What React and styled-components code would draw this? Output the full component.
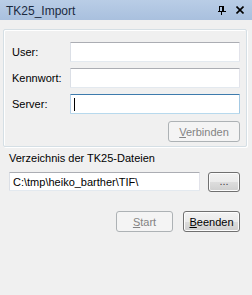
import styled, { createGlobalStyle, css } from "styled-components";

const Global = createGlobalStyle`
  html, body {
    margin: 0;
    padding: 0;
    background: #f0f0f0;
  }
  body {
    font-family: "Liberation Sans", Arial, sans-serif;
    font-size: 11px;
    color: #000;
  }
`;

const Window = styled.div`
  width: 252px;
  height: 295px;
  background: #f0f0f0;
  display: flex;
  flex-direction: column;
  box-sizing: border-box;
`;

const TitleBar = styled.div`
  height: 20px;
  background: linear-gradient(#b9cde6, #a9c0de);
  display: flex;
  align-items: center;
  justify-content: space-between;
  padding: 0 8px 0 6px;
  box-sizing: border-box;
`;

const Title = styled.span`
  font-size: 12px;
  color: #1b2a3f;
  padding-top: 1px;
`;

const TitleIcons = styled.div`
  display: flex;
  align-items: center;
  gap: 10px;
`;

const Group = styled.div`
  margin: 9px 5px 0 3px;
  border: 1px solid #d5dfe5;
  box-shadow: inset 1px 1px 0 #fff, 1px 1px 0 #fff;
  border-radius: 2px;
  padding: 12px 6px 4px 8px;
  display: flex;
  flex-direction: column;
`;

const FieldGrid = styled.div`
  display: grid;
  grid-template-columns: 58px 1fr;
  row-gap: 6px;
  align-items: center;
`;

const Label = styled.label`
  font-size: 11px;
`;

const Input = styled.div`
  height: 20px;
  box-sizing: border-box;
  background: #fff;
  border: 1px solid;
  border-color: ${(p) =>
    p.focused ? "#3d7bad #a4c9e3 #b7d9ed #b5cfe7" : "#abadb3 #e2e3ea #e3e9ef #dbdfe6"};
  border-radius: 1px;
  display: flex;
  align-items: center;
  padding-left: 3px;
  font-size: 11px;
  white-space: nowrap;
  overflow: hidden;
`;

const Caret = styled.span`
  width: 1px;
  height: 13px;
  background: #000;
`;

const ButtonRow = styled.div`
  display: flex;
  justify-content: flex-end;
  gap: 10px;
  margin-top: ${(p) => p.top || 0}px;
`;

const Button = styled.div`
  width: ${(p) => p.w}px;
  height: 21px;
  box-sizing: border-box;
  border-radius: 3px;
  display: flex;
  align-items: center;
  justify-content: center;
  font-size: 11px;
  ${(p) =>
    p.disabled
      ? css`
          border: 1px solid #adb2b5;
          background: #f4f4f4;
          color: #838383;
        `
      : css`
          border: 1px solid #707070;
          background: linear-gradient(#f2f2f2 0%, #ebebeb 50%, #dddddd 51%, #cfcfcf 100%);
          box-shadow: inset 0 0 0 1px #fcfcfc;
          color: #000;
        `}
`;

const Key = styled.span`
  text-decoration: underline;
  text-underline-offset: 1px;
`;

const Lower = styled.div`
  padding: 0 12px 0 9px;
  display: flex;
  flex-direction: column;
`;

const SectionLabel = styled.div`
  margin-top: 4px;
  height: 14px;
  line-height: 14px;
`;

const PathRow = styled.div`
  display: flex;
  align-items: flex-start;
  gap: 8px;
  margin-top: 7px;
`;

const PathInput = styled(Input)`
  flex: 1;
  height: 19px;
`;

const Dots = styled(Button)`
  height: 20px;
  align-items: flex-end;
  padding-bottom: 4px;
  color: #444;
`;

function PinIcon() {
  return (
    <svg width="8" height="9" viewBox="0 0 8 9">
      <path d="M1.5 0.5h4v4" fill="none" stroke="#000" strokeWidth="1" />
      <rect x="1" y="0" width="1" height="5" fill="#000" />
      <rect x="4" y="0" width="2" height="5" fill="#000" />
      <rect x="0" y="5" width="8" height="1" fill="#000" />
      <rect x="3" y="6" width="1" height="3" fill="#000" />
    </svg>
  );
}

function CloseIcon() {
  return (
    <svg width="8" height="8" viewBox="0 0 8 8">
      <path d="M0.5 0.5l7 7M7.5 0.5l-7 7" stroke="#000" strokeWidth="1.6" />
    </svg>
  );
}

export default function App() {
  return (
    <>
      <Global />
      <Window>
        <TitleBar>
          <Title>TK25_Import</Title>
          <TitleIcons>
            <PinIcon />
            <CloseIcon />
          </TitleIcons>
        </TitleBar>
        <Group>
          <FieldGrid>
            <Label>User:</Label>
            <Input />
            <Label>Kennwort:</Label>
            <Input />
            <Label>Server:</Label>
            <Input focused>
              <Caret />
            </Input>
          </FieldGrid>
          <ButtonRow top={7}>
            <Button w={72} disabled>
              <span>
                <Key>V</Key>erbinden
              </span>
            </Button>
          </ButtonRow>
        </Group>
        <Lower>
          <SectionLabel>Verzeichnis der TK25-Dateien</SectionLabel>
          <PathRow>
            <PathInput>C:\tmp\heiko_barther\TIF\</PathInput>
            <Dots w={32}>...</Dots>
          </PathRow>
          <ButtonRow top={19}>
            <Button w={57} disabled>
              <span>
                <Key>S</Key>tart
              </span>
            </Button>
            <Button w={57}>
              <span>
                <Key>B</Key>eenden
              </span>
            </Button>
          </ButtonRow>
        </Lower>
      </Window>
    </>
  );
}
